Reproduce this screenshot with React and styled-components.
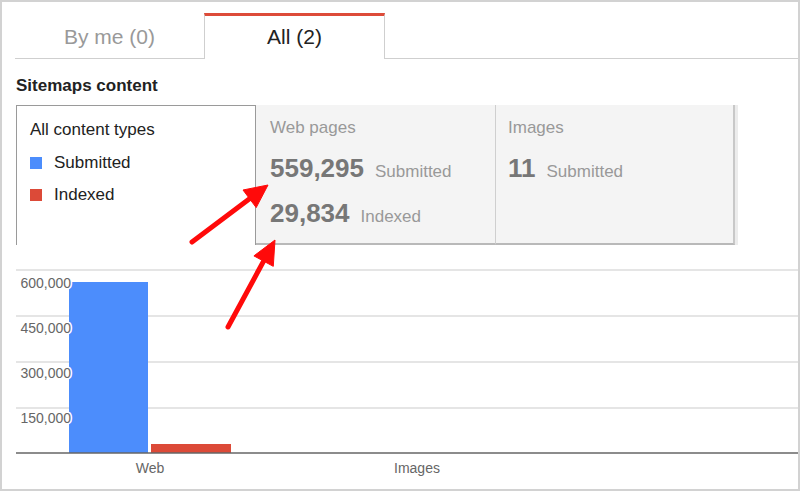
import React from "react";
import styled, { createGlobalStyle } from "styled-components";

const Global = createGlobalStyle`
  html, body { margin: 0; padding: 0; background: #fff; }
  body { font-family: "Liberation Sans", Arial, sans-serif; }
  * { box-sizing: border-box; }
`;

const Page = styled.div`
  position: relative;
  width: 800px;
  height: 491px;
`;

const Frame = styled.div`
  width: 800px;
  height: 491px;
  border: 2px solid #d2d2d2;
  display: flex;
  flex-direction: column;
  overflow: hidden;
`;

const TabBar = styled.div`
  display: flex;
  margin-left: 13px;
  padding-top: 11px;
  border-bottom: 1px solid #cfcfcf;
`;

const Tab = styled.div`
  width: ${(p) => (p.$active ? 181 : 189)}px;
  height: ${(p) => (p.$active ? 46 : 45)}px;
  margin-bottom: ${(p) => (p.$active ? -1 : 0)}px;
  border-top: 3px solid ${(p) => (p.$active ? "#dd4b39" : "transparent")};
  border-left: 1px solid ${(p) => (p.$active ? "#cfcfcf" : "transparent")};
  border-right: 1px solid ${(p) => (p.$active ? "#cfcfcf" : "transparent")};
  background: #fff;
  text-align: center;
  font-size: 21px;
  line-height: 42px;
  color: ${(p) => (p.$active ? "#222" : "#999")};
`;

const Title = styled.div`
  margin: 17px 0 9px 14px;
  font-size: 17px;
  line-height: 20px;
  font-weight: bold;
  color: #222;
`;

const ContentRow = styled.div`
  display: flex;
  margin-left: 14px;
  height: 140px;
`;

const LegendPanel = styled.div`
  width: 240px;
  border: 1px solid #9a9a9a;
  border-bottom: none;
  background: #fff;
  padding: 14px 0 0 13px;
  display: flex;
  flex-direction: column;
  gap: 12.5px;
`;

const LegendTitle = styled.div`
  font-size: 17px;
  line-height: 20px;
  color: #222;
`;

const LegendItem = styled.div`
  display: flex;
  align-items: center;
  gap: 12px;
  font-size: 17px;
  line-height: 20px;
  height: 20px;
  color: #222;
`;

const Swatch = styled.span`
  width: 12px;
  height: 12px;
  background: ${(p) => p.$color};
`;

const StatPanel = styled.div`
  width: ${(p) => p.$w}px;
  background: #f4f4f4;
  border-right: ${(p) => (p.$last ? "2px solid #c8c8c8" : "1px solid #cfcfcf")};
  border-bottom: 2px solid #b9b9b9;
  box-shadow: ${(p) => (p.$last ? "3px 0 0 #ececec" : "none")};
  padding: 13px 0 0 ${(p) => p.$pl}px;
  display: flex;
  flex-direction: column;
  gap: 15px;
`;

const StatLabel = styled.div`
  font-size: 17px;
  line-height: 20px;
  height: 20px;
  color: #999;
`;

const StatLine = styled.div`
  display: flex;
  align-items: baseline;
  gap: 11px;
  height: 30px;
  line-height: 30px;
`;

const StatNumber = styled.span`
  font-size: 26px;
  line-height: 30px;
  font-weight: bold;
  color: #777;
`;

const StatUnit = styled.span`
  font-size: 17px;
  line-height: 20px;
  color: #999;
`;

const Chart = styled.svg`
  display: block;
  flex: none;
  font-family: "Liberation Sans", Arial, sans-serif;
`;

const Overlay = styled.svg`
  position: absolute;
  left: 0;
  top: 0;
  pointer-events: none;
`;

const BLUE = "#4c8dfc";
const RED = "#dc4a38";

const gridYs = [25, 71, 117, 163];
const yLabels = [
  { t: "600,000", y: 42.5 },
  { t: "450,000", y: 88 },
  { t: "300,000", y: 133 },
  { t: "150,000", y: 178 },
];

function Arrow({ x1, y1, x2, y2, head = 23, half = 11 }) {
  const dx = x2 - x1;
  const dy = y2 - y1;
  const len = Math.hypot(dx, dy);
  const ux = dx / len;
  const uy = dy / len;
  const bx = x2 - ux * head;
  const by = y2 - uy * head;
  const px = -uy;
  const py = ux;
  const pts = `${x2},${y2} ${bx + px * half},${by + py * half} ${bx - px * half},${by - py * half}`;
  return (
    <g fill="#ff0a0a" stroke="#ff0a0a">
      <line x1={x1} y1={y1} x2={bx + ux * 2} y2={by + uy * 2} strokeWidth="5" strokeLinecap="round" />
      <polygon points={pts} strokeWidth="1" strokeLinejoin="round" />
    </g>
  );
}

export default function App() {
  return (
    <Page>
      <Global />
      <Frame>
        <TabBar>
          <Tab>By me (0)</Tab>
          <Tab $active>All (2)</Tab>
        </TabBar>
        <Title>Sitemaps content</Title>
        <ContentRow>
          <LegendPanel>
            <LegendTitle>All content types</LegendTitle>
            <LegendItem>
              <Swatch $color={BLUE} />
              Submitted
            </LegendItem>
            <LegendItem>
              <Swatch $color={RED} />
              Indexed
            </LegendItem>
          </LegendPanel>
          <StatPanel $w={240} $pl={14}>
            <StatLabel>Web pages</StatLabel>
            <StatLine>
              <StatNumber>559,295</StatNumber>
              <StatUnit>Submitted</StatUnit>
            </StatLine>
            <StatLine>
              <StatNumber>29,834</StatNumber>
              <StatUnit>Indexed</StatUnit>
            </StatLine>
          </StatPanel>
          <StatPanel $w={239} $pl={12} $last>
            <StatLabel>Images</StatLabel>
            <StatLine>
              <StatNumber>11</StatNumber>
              <StatUnit>Submitted</StatUnit>
            </StatLine>
          </StatPanel>
        </ContentRow>
        <Chart width="796" height="242" viewBox="0 0 796 242">
          {gridYs.map((y) => (
            <line key={y} x1="14" x2="796" y1={y} y2={y} stroke="#dcdcdc" strokeWidth="1.5" />
          ))}
          <rect x="67" y="37" width="79" height="171" fill={BLUE} />
          <rect x="149" y="199" width="80" height="9" fill={RED} />
          <line x1="14" x2="796" y1="208" y2="208" stroke="#666" strokeWidth="1.5" />
          {yLabels.map((l) => (
            <text
              key={l.t}
              x="69"
              y={l.y}
              textAnchor="end"
              fontSize="14"
              fill="#666"
              stroke="#fff"
              strokeWidth="3"
              paintOrder="stroke"
            >
              {l.t}
            </text>
          ))}
          <text x="148" y="228" textAnchor="middle" fontSize="14" fill="#666">Web</text>
          <text x="415" y="228" textAnchor="middle" fontSize="14" fill="#666">Images</text>
        </Chart>
      </Frame>
      <Overlay width="800" height="491" viewBox="0 0 800 491">
        <Arrow x1={192} y1={242} x2={268} y2={185} />
        <Arrow x1={228} y1={327} x2={275} y2={240} head={24} />
      </Overlay>
    </Page>
  );
}
